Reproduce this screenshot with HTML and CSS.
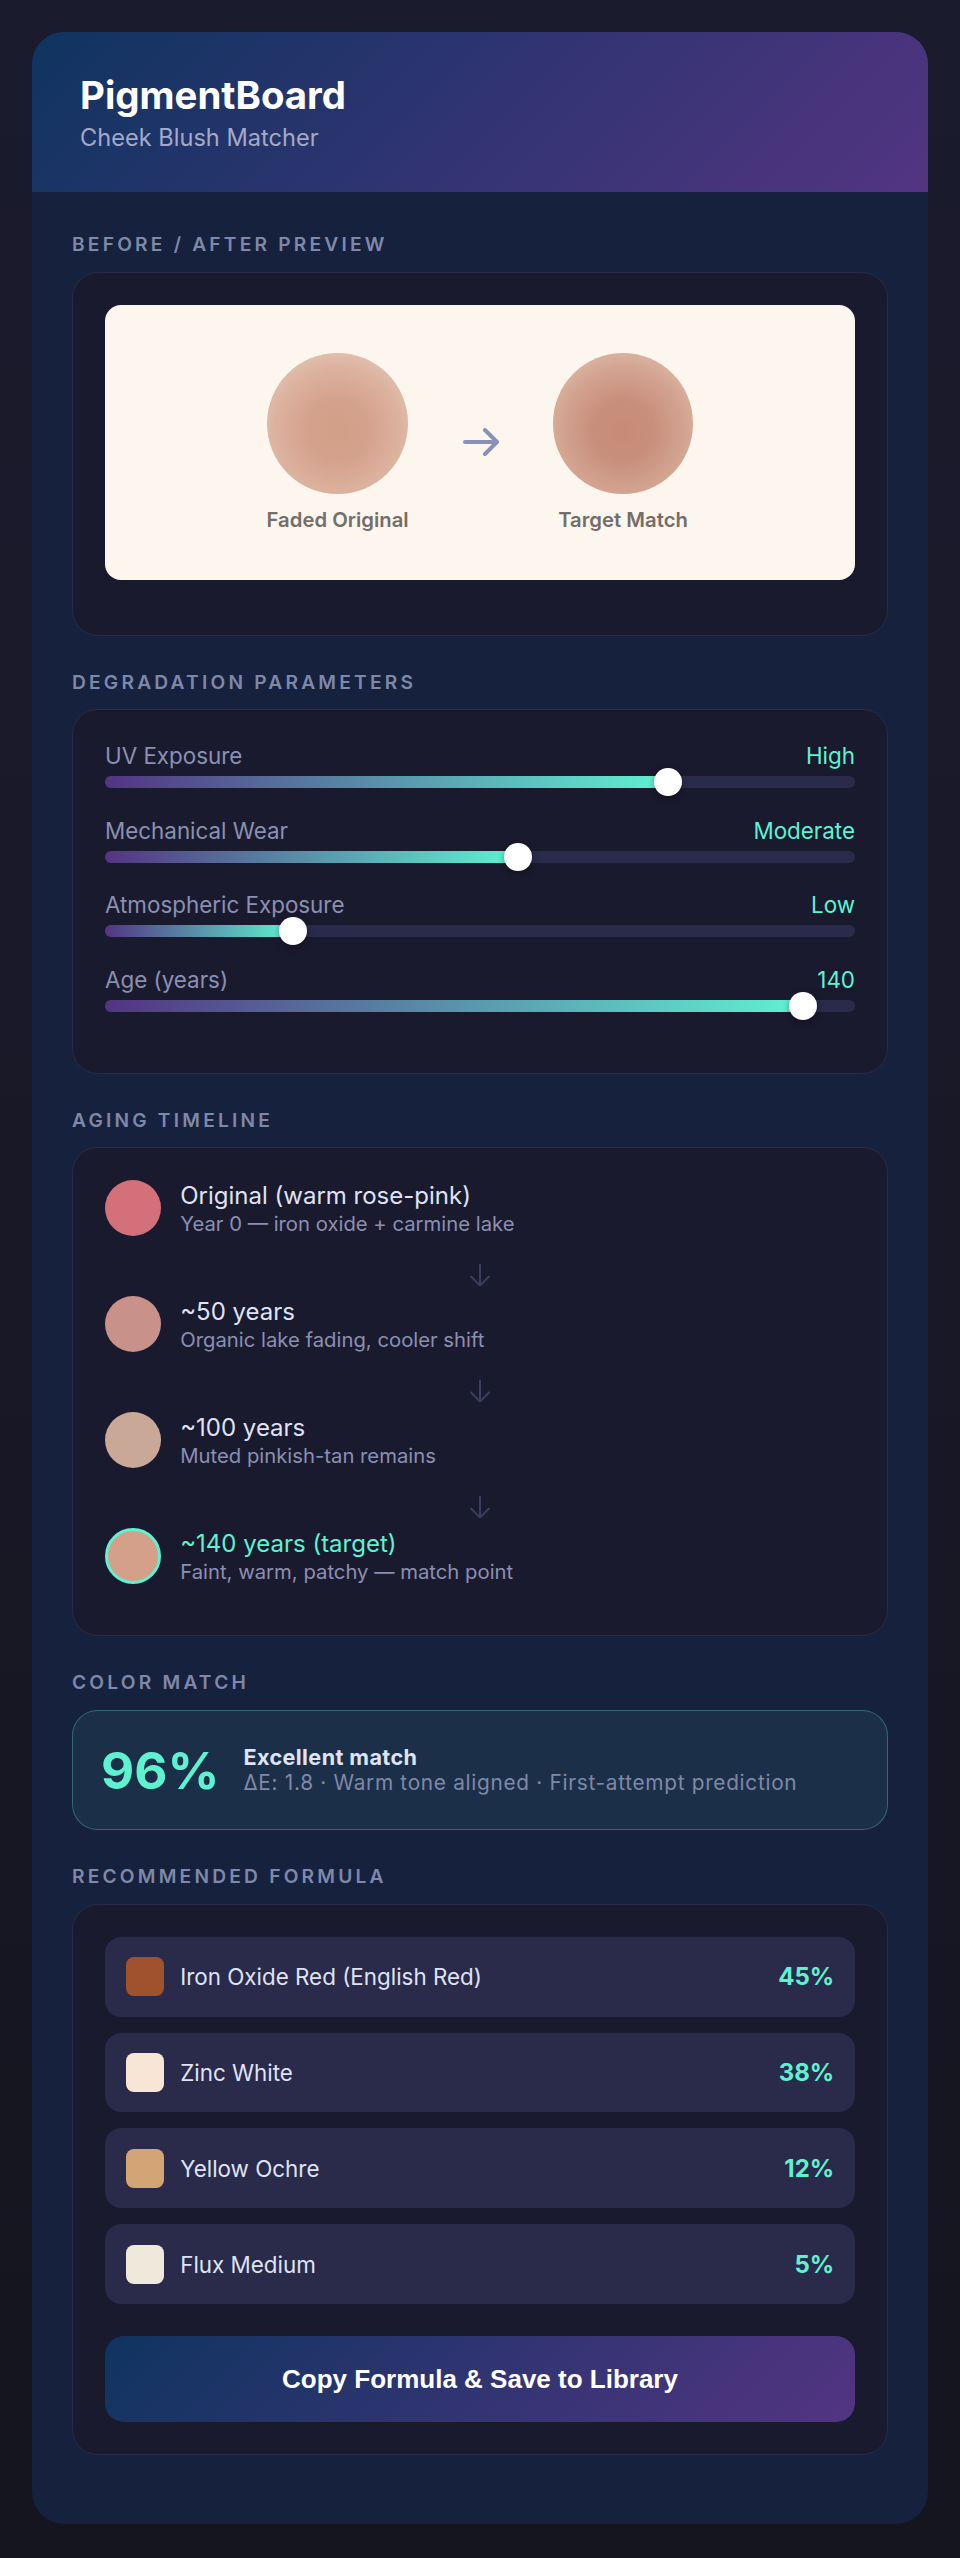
FILE: index.html
```html
<!DOCTYPE html>
<html lang="en">
<head>
<meta charset="utf-8">
<title>PigmentBoard — Cheek Blush Matcher</title>
<link rel="stylesheet" href="styles.css">
</head>
<body>
<div class="card">
  <header class="header">
    <h1 class="title">PigmentBoard</h1>
    <p class="subtitle">Cheek Blush Matcher</p>
  </header>

  <main class="content">
    <section class="section">
      <h2 class="label">Before / After Preview</h2>
      <div class="panel panel-preview">
        <div class="preview">
          <div class="swatch-col">
            <div class="blush blush-faded"></div>
            <span class="caption">Faded Original</span>
          </div>
          <svg class="preview-arrow" width="36" height="30" viewBox="0 0 36 30" fill="none" stroke="#8891b8" stroke-width="4" stroke-linecap="round" stroke-linejoin="round">
            <path d="M2 15H34M22 3L34 15L22 27"/>
          </svg>
          <div class="swatch-col">
            <div class="blush blush-target"></div>
            <span class="caption">Target Match</span>
          </div>
        </div>
      </div>
    </section>

    <section class="section">
      <h2 class="label">Degradation Parameters</h2>
      <div class="panel panel-sliders">
        <div class="slider">
          <div class="slider-head"><span class="slider-name">UV Exposure</span><span class="slider-value">High</span></div>
          <div class="track"><div class="fill" style="width:75%"></div><div class="thumb" style="left:75%"></div></div>
        </div>
        <div class="slider">
          <div class="slider-head"><span class="slider-name">Mechanical Wear</span><span class="slider-value">Moderate</span></div>
          <div class="track"><div class="fill" style="width:55%"></div><div class="thumb" style="left:55%"></div></div>
        </div>
        <div class="slider">
          <div class="slider-head"><span class="slider-name">Atmospheric Exposure</span><span class="slider-value">Low</span></div>
          <div class="track"><div class="fill" style="width:25%"></div><div class="thumb" style="left:25%"></div></div>
        </div>
        <div class="slider">
          <div class="slider-head"><span class="slider-name">Age (years)</span><span class="slider-value">140</span></div>
          <div class="track"><div class="fill" style="width:93%"></div><div class="thumb" style="left:93%"></div></div>
        </div>
      </div>
    </section>

    <section class="section">
      <h2 class="label">Aging Timeline</h2>
      <div class="panel panel-timeline">
        <div class="tl-item">
          <div class="tl-dot dot-original"></div>
          <div class="tl-text">
            <div class="tl-title">Original (warm rose-pink)</div>
            <div class="tl-sub">Year 0 — iron oxide + carmine lake</div>
          </div>
        </div>
        <div class="tl-arrow">
          <svg width="22" height="24" viewBox="0 0 22 24" fill="none" stroke="#3a3d5e" stroke-width="2" stroke-linecap="round" stroke-linejoin="round"><path d="M11 1.5V22.5M2 13.5L11 22.5L20 13.5"/></svg>
        </div>
        <div class="tl-item">
          <div class="tl-dot dot-50"></div>
          <div class="tl-text">
            <div class="tl-title">~50 years</div>
            <div class="tl-sub">Organic lake fading, cooler shift</div>
          </div>
        </div>
        <div class="tl-arrow">
          <svg width="22" height="24" viewBox="0 0 22 24" fill="none" stroke="#3a3d5e" stroke-width="2" stroke-linecap="round" stroke-linejoin="round"><path d="M11 1.5V22.5M2 13.5L11 22.5L20 13.5"/></svg>
        </div>
        <div class="tl-item">
          <div class="tl-dot dot-100"></div>
          <div class="tl-text">
            <div class="tl-title">~100 years</div>
            <div class="tl-sub">Muted pinkish-tan remains</div>
          </div>
        </div>
        <div class="tl-arrow">
          <svg width="22" height="24" viewBox="0 0 22 24" fill="none" stroke="#3a3d5e" stroke-width="2" stroke-linecap="round" stroke-linejoin="round"><path d="M11 1.5V22.5M2 13.5L11 22.5L20 13.5"/></svg>
        </div>
        <div class="tl-item">
          <div class="tl-dot dot-target"></div>
          <div class="tl-text">
            <div class="tl-title tl-title-target">~140 years (target)</div>
            <div class="tl-sub">Faint, warm, patchy — match point</div>
          </div>
        </div>
      </div>
    </section>

    <section class="section">
      <h2 class="label">Color Match</h2>
      <div class="match">
        <div class="match-pct">96%</div>
        <div class="match-text">
          <div class="match-title">Excellent match</div>
          <div class="match-sub">ΔE: 1.8 · Warm tone aligned · First-attempt prediction</div>
        </div>
      </div>
    </section>

    <section class="section">
      <h2 class="label">Recommended Formula</h2>
      <div class="panel panel-formula">
        <div class="formula-list">
          <div class="row"><span class="chip chip-iron"></span><span class="name">Iron Oxide Red (English Red)</span><span class="pct">45%</span></div>
          <div class="row"><span class="chip chip-zinc"></span><span class="name">Zinc White</span><span class="pct">38%</span></div>
          <div class="row"><span class="chip chip-ochre"></span><span class="name">Yellow Ochre</span><span class="pct">12%</span></div>
          <div class="row"><span class="chip chip-flux"></span><span class="name">Flux Medium</span><span class="pct">5%</span></div>
        </div>
        <button class="btn" type="button">Copy Formula &amp; Save to Library</button>
      </div>
    </section>
  </main>
</div>
</body>
</html>
```

FILE: styles.css
```css
* {
  box-sizing: border-box;
  margin: 0;
  padding: 0;
}

html, body {
  min-height: 100%;
}

body {
  font-family: Inter, "Noto Sans", "Liberation Sans", sans-serif;
  background: linear-gradient(180deg, #1b1b2e 0%, #15151f 100%);
  padding: 32px;
  color: #dfe3f5;
}

.card {
  background: #16213e;
  border-radius: 32px;
  overflow: hidden;
}

/* Header */
.header {
  padding: 40px 48px 40px;
  background: linear-gradient(135deg, #0f3460 0%, #533483 100%);
}

.title {
  font-size: 38.4px;
  font-weight: 700;
  color: #ffffff;
  line-height: normal;
}

.subtitle {
  margin-top: 5px;
  font-size: 23.6px;
  color: #a3a9c9;
  line-height: normal;
}

/* Content */
.content {
  padding: 38.4px 40px 37px;
}

.section {
  margin-bottom: 32px;
}

.label {
  font-size: 19.2px;
  font-weight: 600;
  text-transform: uppercase;
  letter-spacing: 3.2px;
  color: #7f88a8;
  line-height: 1.5;
  margin-bottom: 12.8px;
}

.panel {
  background: #1a1a2e;
  border: 1px solid #2a2a4a;
  border-radius: 25.6px;
  padding: 32px;
}

/* Preview */
.panel-preview {
  padding-bottom: 55px;
}

.preview {
  background: #fdf6ee;
  border-radius: 16px;
  padding: 48px;
  display: flex;
  justify-content: center;
  align-items: center;
  gap: 54px;
}

.swatch-col {
  display: flex;
  flex-direction: column;
  align-items: center;
  gap: 12.8px;
}

.blush {
  width: 140.8px;
  height: 140.8px;
  border-radius: 50%;
}

.blush-faded {
  background: radial-gradient(circle at 50% 55%, #d29e88 0%, #d4a28c 30%, #dcb29f 60%, #ead3c6 100%);
}

.blush-target {
  background: radial-gradient(circle at 50% 55%, #c58b77 0%, #c8907c 30%, #d3a491 60%, #e6c9b9 100%);
}

.caption {
  font-size: 20.3px;
  font-weight: 600;
  color: #756d69;
  line-height: normal;
}

.preview-arrow {
  display: block;
  flex-shrink: 0;
}

/* Sliders */
.panel-sliders {
  padding-bottom: 32px;
}

.slider {
  margin-bottom: 28.8px;
}

.slider-head {
  display: flex;
  justify-content: space-between;
  align-items: baseline;
  font-size: 22.4px;
  line-height: normal;
  margin-bottom: 6.8px;
}

.slider-name {
  color: #8a90b2;
}

.slider-value {
  color: #5ff2d2;
}

.track {
  position: relative;
  height: 12px;
  background: #2a2a4a;
  border-radius: 999px;
}

.fill {
  height: 100%;
  border-radius: 999px;
  background: linear-gradient(90deg, #533483 0%, #5ff2d2 100%);
}

.thumb {
  position: absolute;
  top: 50%;
  width: 28px;
  height: 28px;
  border-radius: 50%;
  background: #ffffff;
  transform: translate(-50%, -50%);
  box-shadow: 0 2px 6px rgba(0, 0, 0, 0.35);
}

/* Timeline */
.panel-timeline {
  padding-bottom: 51.2px;
}

.tl-item {
  display: flex;
  align-items: center;
  gap: 19.2px;
  height: 56px;
}

.tl-dot {
  width: 56px;
  height: 56px;
  border-radius: 50%;
  flex-shrink: 0;
}

.dot-original { background: #d4707a; }
.dot-50 { background: #c8928a; }
.dot-100 { background: #caa898; }
.dot-target {
  background: #d4a08a;
  border: 3.2px solid #5ff2d2;
}

.tl-text {
  padding-top: 2px;
}

.tl-title {
  font-size: 24px;
  font-weight: 400;
  color: #dfe3f5;
  line-height: 1.15;
}

.tl-title-target {
  color: #5ff2d2;
}

.tl-sub {
  margin-top: 1px;
  font-size: 20.3px;
  color: #8a90b2;
  line-height: normal;
}

.tl-arrow {
  height: 60px;
  padding-top: 27px;
  display: flex;
  justify-content: center;
  align-items: flex-start;
}

.tl-arrow svg {
  display: block;
}

/* Color match */
.match {
  display: flex;
  align-items: center;
  gap: 24px;
  padding: 28px;
  background: rgba(95, 242, 210, 0.07);
  border: 1px solid rgba(95, 242, 210, 0.3);
  border-radius: 25.6px;
}

.match-pct {
  font-size: 51.2px;
  font-weight: 700;
  color: #5ff2d2;
  line-height: normal;
}

.match-title {
  font-size: 21.6px;
  font-weight: 700;
  letter-spacing: 0.4px;
  color: #dfe3f5;
  line-height: normal;
}

.match-sub {
  font-size: 20.8px;
  letter-spacing: 0.7px;
  color: #8088a8;
  line-height: normal;
}

/* Formula */
.formula-list {
  display: flex;
  flex-direction: column;
  gap: 16px;
}

.row {
  display: flex;
  align-items: center;
  gap: 16px;
  padding: 20.8px;
  background: #2a2a4a;
  border-radius: 16px;
}

.chip {
  width: 38.4px;
  height: 38.4px;
  border-radius: 8px;
  flex-shrink: 0;
}

.chip-iron { background: #a0522d; }
.chip-zinc { background: #f7e6d6; }
.chip-ochre { background: #d4a574; }
.chip-flux { background: #f1e8dc; }

.name {
  flex: 1;
  font-size: 22.4px;
  color: #dfe3f5;
  line-height: normal;
}

.pct {
  font-size: 24px;
  font-weight: 700;
  color: #5ff2d2;
  line-height: normal;
}

.btn {
  display: block;
  width: 100%;
  margin-top: 32px;
  padding: 27.5px;
  border: none;
  border-radius: 19.2px;
  background: linear-gradient(135deg, #0f3460 0%, #533483 100%);
  color: #ffffff;
  font-family: "Liberation Sans", Arial, sans-serif;
  font-size: 26px;
  font-weight: 700;
  line-height: normal;
  cursor: pointer;
}
```
